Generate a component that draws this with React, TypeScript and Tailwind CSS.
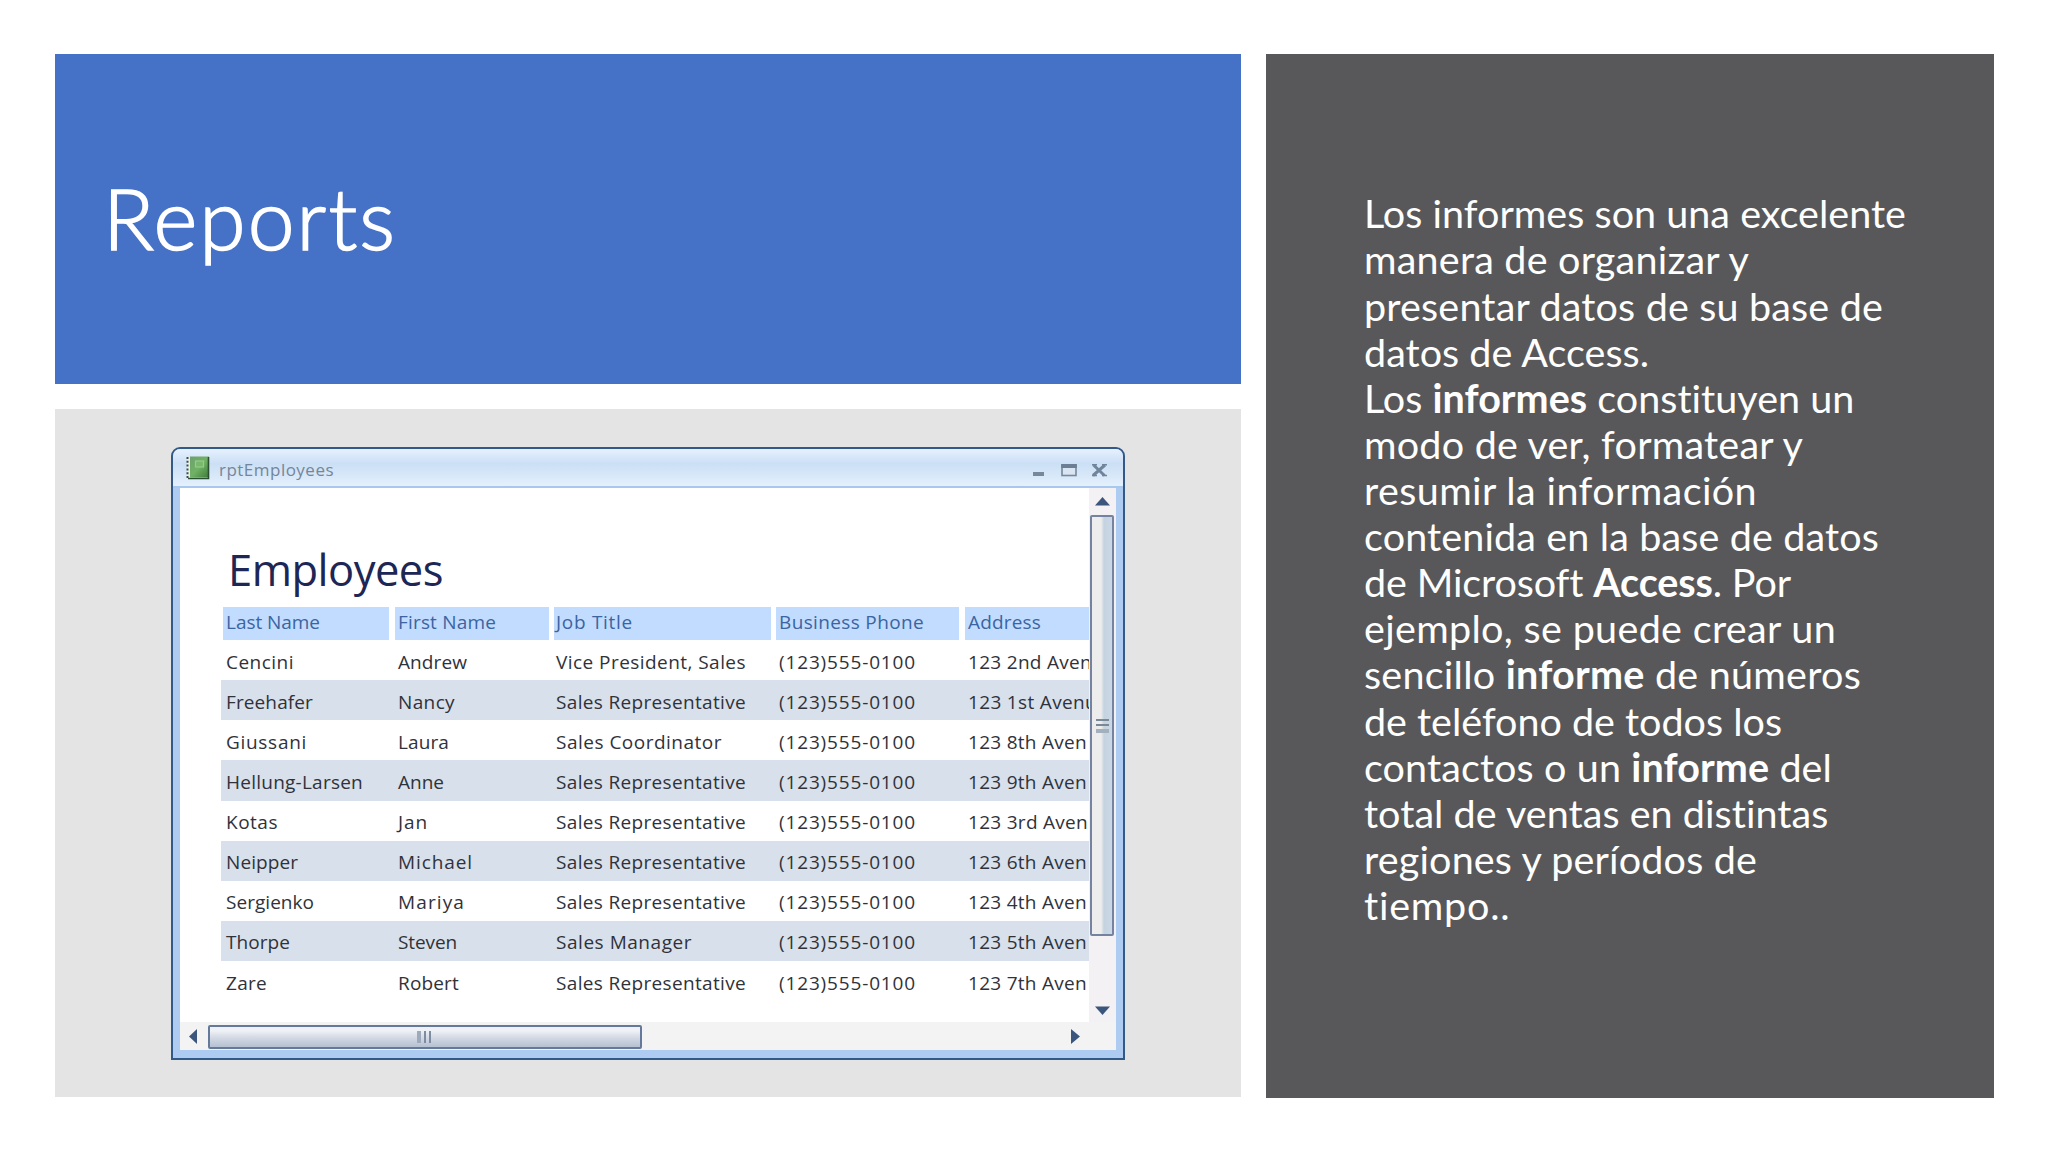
import { useLayoutEffect, useRef, type ReactNode } from "react";

/* Spreads its letters so that the line takes exactly `width` pixels. */
function Fit({ width, children, className = "" }: { width: number; children: ReactNode; className?: string }) {
  const ref = useRef<HTMLSpanElement>(null);
  useLayoutEffect(() => {
    const el = ref.current;
    if (!el) return;
    el.style.letterSpacing = "0px";
    const natural = el.getBoundingClientRect().width;
    const count = (el.textContent ?? "").length;
    el.style.letterSpacing = `${(width - natural) / count}px`;
  }, [width]);
  return (
    <span ref={ref} className={`inline-block whitespace-pre ${className}`}>
      {children}
    </span>
  );
}

type Cell = [string, number];

const header: Cell[] = [
  ["Last Name", 94],
  ["First Name", 98],
  ["Job Title", 77],
  ["Business Phone", 145],
  ["Address", 73],
];

const rep: Cell = ["Sales Representative", 190];
const phone: Cell = ["(123)555-0100", 137];

/* The address column runs under the scroll bar, so only its visible part is listed. */
const rows: Cell[][] = [
  [["Cencini", 68], ["Andrew", 69], ["Vice President, Sales", 190], phone, ["123 2nd Aven", 124]],
  [["Freehafer", 87], ["Nancy", 57], rep, phone, ["123 1st Avenu", 129]],
  [["Giussani", 81], ["Laura", 51], ["Sales Coordinator", 166], phone, ["123 8th Aven", 119]],
  [["Hellung-Larsen", 137], ["Anne", 46], rep, phone, ["123 9th Aven", 119]],
  [["Kotas", 52], ["Jan", 30], rep, phone, ["123 3rd Aven", 120]],
  [["Neipper", 72], ["Michael", 75], rep, phone, ["123 6th Aven", 119]],
  [["Sergienko", 88], ["Mariya", 67], rep, phone, ["123 4th Aven", 119]],
  [["Thorpe", 64], ["Steven", 59], ["Sales Manager", 136], phone, ["123 5th Aven", 119]],
  [["Zare", 41], ["Robert", 61], rep, phone, ["123 7th Aven", 119]],
];

const body: [ReactNode, number][] = [
  ["Los informes son una excelente", 542],
  ["manera de organizar y", 385],
  ["presentar datos de su base de", 519],
  ["datos de Access.", 285],
  [<>Los <b>informes</b> constituyen un</>, 491],
  ["modo de ver, formatear y", 439],
  ["resumir la información", 393],
  ["contenida en la base de datos", 515],
  [<>de Microsoft <b>Access</b>. Por</>, 426],
  ["ejemplo, se puede crear un", 472],
  [<>sencillo <b>informe</b> de números</>, 497],
  ["de teléfono de todos los", 418],
  [<>contactos o un <b>informe</b> del</>, 468],
  ["total de ventas en distintas", 465],
  ["regiones y períodos de", 393],
  ["tiempo..", 147],
];

const columns = "grid grid-cols-[172px_158px_223px_189px_130px]";

function ReportIcon() {
  return (
    <svg width="24" height="24" viewBox="0 0 24 24">
      <defs>
        <linearGradient id="cover" x1="0" y1="0" x2="1" y2="1">
          <stop offset="0" stopColor="#6fa070" />
          <stop offset="0.5" stopColor="#6fb264" />
          <stop offset="1" stopColor="#3c7a3a" />
        </linearGradient>
      </defs>
      <rect x="1" y="1" width="22" height="22" fill="#e9efe6" />
      <rect x="4" y="0.5" width="19" height="21" fill="url(#cover)" />
      <path d="M22.5 1v21.5H2" fill="none" stroke="#2b5031" strokeWidth="1.6" />
      <path d="M1.5 1v22" stroke="#3e4b44" strokeWidth="2" strokeDasharray="2 1.8" />
      <rect x="9.5" y="5" width="8" height="6" fill="#78b86c" stroke="#97c98c" strokeWidth="1.2" />
    </svg>
  );
}

function WindowButtons() {
  return (
    <svg width="76" height="20" viewBox="0 0 76 20">
      <rect x="0" y="12" width="11" height="4" fill="#76889c" />
      <rect x="29" y="5" width="14" height="10.5" fill="#d9e5f2" stroke="#76889c" strokeWidth="1.6" />
      <rect x="28.2" y="4" width="15.6" height="4" fill="#6b7e94" />
      <path d="M60.5 5l11 10.5M72 5L60 15.5" stroke="#70849b" strokeWidth="3" />
      <path d="M59 4.7h5M69 4.7h5M59 15.5h5M69 15.5h5" stroke="#70849b" strokeWidth="1.6" />
    </svg>
  );
}

function ReportWindow() {
  return (
    <div className="flex h-[613px] w-[954px] flex-col overflow-hidden rounded-t-[9px] border-2 border-[#335a87] bg-[#aecbf2] font-['Open_Sans',sans-serif]">
      <div className="flex h-[39px] shrink-0 items-start border-b-2 border-[#a9c8ee] bg-linear-to-b from-[#e6f1fd] via-[#cbdff5] via-40% to-[#e4f0fc] pl-[13px] pr-[14px] pt-[7px]">
        <ReportIcon />
        <div className="ml-[9px] flex-1 text-[17px] leading-[28px] text-[#74869b]">
          <Fit width={115}>rptEmployees</Fit>
        </div>
        <div className="pt-[4px]">
          <WindowButtons />
        </div>
      </div>
      <div className="mx-[7px] mb-[8px] flex min-h-0 flex-1 flex-col bg-white">
        <div className="flex min-h-0 flex-1">
          <div className="min-w-0 flex-1 overflow-hidden pl-[41px] pt-[59px]">
            <div className="h-[60px] pl-[7px] text-[43.5px] leading-[46px] text-[#1d2654]">
              <Fit width={215}>Employees</Fit>
            </div>
            <div className="flex h-[33px] gap-[5px] pl-[2px] text-[19px] leading-[30px] text-[#3c64a0]">
              {header.map(([text, width], i) => (
                <div
                  key={text}
                  className={[
                    "w-[166px] pl-[3px] mr-[1px]",
                    "w-[154px] pl-[3px]",
                    "w-[217px] pl-[2px]",
                    "w-[183px] pl-[3px] mr-[1px]",
                    "w-[130px] pl-[3px]",
                  ][i] + " shrink-0 bg-[#c1dcff]"}
                >
                  <Fit width={width}>{text}</Fit>
                </div>
              ))}
            </div>
            {rows.map((row, r) => (
              <div
                key={r}
                className={`${columns} h-[40.15px] w-[880px] pl-[5px] pt-[1.5px] text-[19px] leading-[40px] text-[#30323a] ${r % 2 ? "bg-[#d8e0eb]" : ""}`}
              >
                {row.map(([text, width], c) => (
                  <div key={c}>
                    <Fit width={width}>{text}</Fit>
                  </div>
                ))}
              </div>
            ))}
          </div>
          <div className="flex w-[27px] shrink-0 flex-col items-start bg-[#f3f1f3] pl-px">
            <svg className="ml-[5px] mt-[9px]" width="15" height="9" viewBox="0 0 15 9">
              <path d="M7.5 0L15 8.5H0z" fill="#3c557d" />
            </svg>
            <div className="mt-[9px] flex h-[421px] w-[24px] flex-col items-center justify-center gap-[3px] rounded-[2px] border-2 border-[#7583a0] bg-linear-to-r from-[#ededed] from-45% via-[#c5d3e0] via-60% to-[#cbd7e6]">
              <div className="h-[2px] w-[13px] bg-[#7b8997]" />
              <div className="h-[2px] w-[13px] bg-[#7b8997]" />
              <div className="h-[4px] w-[13px] bg-[#a4b1bc]" />
            </div>
            <svg className="mb-[7px] ml-[5px] mt-auto" width="15" height="9" viewBox="0 0 15 9">
              <path d="M0 0.5h15L7.5 9z" fill="#3c557d" />
            </svg>
          </div>
        </div>
        <div className="flex h-[28px] shrink-0 items-center bg-[#f4f3f4] pt-px">
          <svg className="ml-[9px]" width="8" height="15" viewBox="0 0 8 15">
            <path d="M8 0v15L0 7.5z" fill="#3c557d" />
          </svg>
          <div className="ml-[11px] flex h-[24px] w-[434px] items-center justify-center gap-[3px] rounded-[2px] border-2 border-[#657a9a] bg-linear-to-b from-[#eef1f5] from-20% via-[#d5dce6] via-50% to-[#b5c0d1] pr-[3px]">
            <div className="h-[12px] w-[4px] bg-[#9eaaba]" />
            <div className="h-[12px] w-[2px] bg-[#7d8ca1]" />
            <div className="h-[12px] w-[2px] bg-[#7d8ca1]" />
          </div>
          <svg className="ml-auto mr-[36px]" width="9" height="15" viewBox="0 0 9 15">
            <path d="M0 0l9 7.5L0 15z" fill="#3c557d" />
          </svg>
        </div>
      </div>
    </div>
  );
}

export default function App() {
  return (
    <div className="flex h-[1152px] w-[2048px] gap-[25px] overflow-hidden bg-white pl-[55px] pt-[54px]">
      <div className="flex w-[1186px] shrink-0 flex-col gap-[25px]">
        <div className="h-[330px] bg-[#4571c7] pl-[48px] pt-[114px]">
          <h1 className="font-['Lato',sans-serif] text-[84px] font-light leading-[100px] text-white [-webkit-text-stroke:1.6px_white]">
            <Fit width={294}>Reports</Fit>
          </h1>
        </div>
        <div className="h-[688px] bg-[#e4e4e4] pl-[116px] pt-[38px]">
          <ReportWindow />
        </div>
      </div>
      <div className="h-[1044px] w-[728px] bg-[#58585a] pl-[98px] pt-[136.3px] font-['Lato',sans-serif] text-[39.5px] leading-[46.12px] text-white">
        {body.map(([text, width], i) => (
          <div key={i} className="h-[46.12px]">
            <Fit width={width}>{text}</Fit>
          </div>
        ))}
      </div>
    </div>
  );
}
